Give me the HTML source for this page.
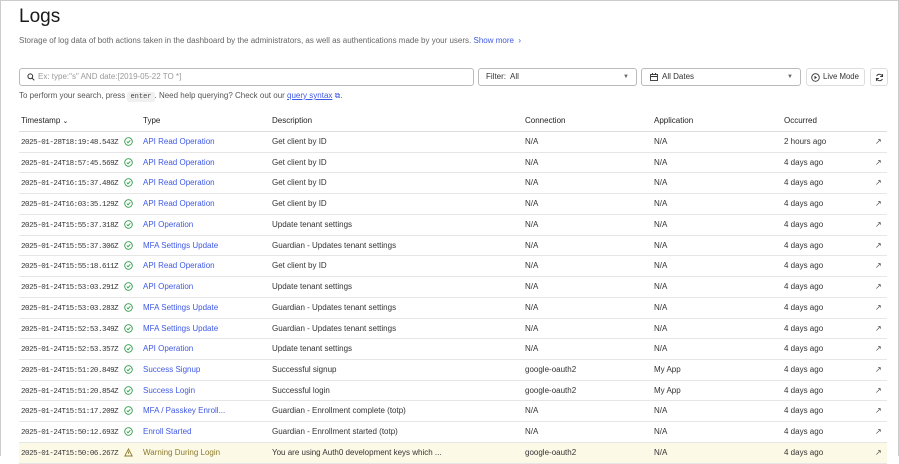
<!DOCTYPE html>
<html><head><style>
*{box-sizing:border-box;margin:0;padding:0}
body{width:899px;height:456px;overflow:hidden;background:#fff;font-family:"Liberation Sans",sans-serif;color:#222;position:relative;border:1px solid #ccc;border-bottom:none}
.a{position:absolute;white-space:nowrap}
h1{position:absolute;left:18px;top:5px;font-size:19px;font-weight:normal;color:#1a1a1a}
.sub{left:18px;top:35px;font-size:8px;color:#666}
.sub span{color:#3f59e4}
.box{position:absolute;border:1px solid #bbb;border-radius:3px;height:18px;top:67px;font-size:8px;color:#333;line-height:16px;white-space:nowrap}
.hint{left:18px;top:90px;font-size:8px;color:#555}
code{font-family:"Liberation Mono",monospace;font-size:7px;background:#f0f0f0;padding:1px 3px;border-radius:2px;color:#444}
.hint u{color:#3f59e4}
.hdr{position:absolute;left:18px;top:115px;width:868px;height:16px;border-bottom:1px solid #ddd;font-size:8px;color:#222}
.row{position:absolute;left:18px;width:868px;height:20.73px;border-bottom:1px solid #e6e6e6;font-size:8px;line-height:20px}
.row div,.hdr div{position:absolute;top:0;white-space:nowrap}
.row .ts{top:1px;left:2px;font-family:"Liberation Mono",monospace;font-size:7.5px;letter-spacing:-.45px;color:#333}
.ty{left:124px;color:#3f59e4}
.ic svg{display:block;position:absolute;top:5px;left:105px}
.de{left:253px;color:#333}.co{left:506px;color:#333}.ap{left:635px;color:#333}.oc{left:765px;color:#333}.ar{left:856px;color:#444}
.w{background:#fdf9e7}.w .ty{color:#8b7a2c}
</style></head><body>
<h1>Logs</h1>
<div class="a sub">Storage of log data of both actions taken in the dashboard by the administrators, as well as authentications made by your users. <span>Show more &nbsp;›</span></div>
<div class="box" style="left:18px;width:455px;padding-left:18px;color:#999"><svg style="position:absolute;left:7px;top:4px" width="8" height="8" viewBox="0 0 8 8"><circle cx="3.3" cy="3.3" r="2.4" fill="none" stroke="#333" stroke-width="1"/><path d="M5 5L7.3 7.3" stroke="#333" stroke-width="1"/></svg>Ex: type:"s" AND date:[2019-05-22 TO *]</div>
<div class="box" style="left:477px;width:159px;padding-left:7px">Filter:&nbsp; All<span style="position:absolute;right:7px;font-size:6px;color:#666">▼</span></div>
<div class="box" style="left:640px;width:160px;padding-left:20px"><svg style="position:absolute;left:8px;top:4px" width="8" height="8" viewBox="0 0 8 8"><rect x=".5" y="1.5" width="7" height="6" fill="none" stroke="#333" stroke-width=".9"/><path d="M.5 3.5H7.5M2.5 0V2M5.5 0V2" stroke="#333" stroke-width=".9"/></svg>All Dates<span style="position:absolute;right:7px;font-size:6px;color:#666">▼</span></div>
<div class="box" style="left:805px;width:59px;padding-left:16px;border-color:#ddd;font-size:7.8px">Live Mode<svg style="position:absolute;left:4px;top:4px" width="9" height="9" viewBox="0 0 9 9"><circle cx="4.5" cy="4.5" r="3.8" fill="none" stroke="#333" stroke-width=".9"/><path d="M3.5 2.8L6 4.5 3.5 6.2Z" fill="#333"/></svg></div>
<div class="box" style="left:869px;width:18px;border-color:#ddd"><svg style="position:absolute;left:4px;top:3.5px" width="9" height="9" viewBox="0 0 9 9"><path d="M7.5 3.5A3.2 3.2 0 0 0 1.6 3M1.5 5.5A3.2 3.2 0 0 0 7.4 6M7.6 1V3.5H5.2M1.4 8V5.5H3.8" fill="none" stroke="#333" stroke-width=".9"/></svg></div>
<div class="a hint">To perform your search, press <code>enter</code>. Need help querying? Check out our <u>query syntax</u> <span style="color:#3f59e4">⧉</span>.</div>
<div class="hdr"><div style="left:2px">Timestamp <span style="font-size:7px">⌄</span></div><div style="left:124px">Type</div><div style="left:253px">Description</div><div style="left:506px">Connection</div><div style="left:635px">Application</div><div style="left:765px">Occurred</div></div>
<div id="rows"></div>
<script>
var d=[["2025-01-28T18:19:48.543Z","API Read Operation","Get client by ID","N/A","N/A","2 hours ago"],
["2025-01-24T18:57:45.569Z","API Read Operation","Get client by ID","N/A","N/A","4 days ago"],
["2025-01-24T16:15:37.486Z","API Read Operation","Get client by ID","N/A","N/A","4 days ago"],
["2025-01-24T16:03:35.129Z","API Read Operation","Get client by ID","N/A","N/A","4 days ago"],
["2025-01-24T15:55:37.318Z","API Operation","Update tenant settings","N/A","N/A","4 days ago"],
["2025-01-24T15:55:37.306Z","MFA Settings Update","Guardian - Updates tenant settings","N/A","N/A","4 days ago"],
["2025-01-24T15:55:18.611Z","API Read Operation","Get client by ID","N/A","N/A","4 days ago"],
["2025-01-24T15:53:03.291Z","API Operation","Update tenant settings","N/A","N/A","4 days ago"],
["2025-01-24T15:53:03.283Z","MFA Settings Update","Guardian - Updates tenant settings","N/A","N/A","4 days ago"],
["2025-01-24T15:52:53.349Z","MFA Settings Update","Guardian - Updates tenant settings","N/A","N/A","4 days ago"],
["2025-01-24T15:52:53.357Z","API Operation","Update tenant settings","N/A","N/A","4 days ago"],
["2025-01-24T15:51:20.849Z","Success Signup","Successful signup","google-oauth2","My App","4 days ago"],
["2025-01-24T15:51:20.854Z","Success Login","Successful login","google-oauth2","My App","4 days ago"],
["2025-01-24T15:51:17.209Z","MFA / Passkey Enroll...","Guardian - Enrollment complete (totp)","N/A","N/A","4 days ago"],
["2025-01-24T15:50:12.693Z","Enroll Started","Guardian - Enrollment started (totp)","N/A","N/A","4 days ago"],
["2025-01-24T15:50:06.267Z","Warning During Login","You are using Auth0 development keys which ...","google-oauth2","N/A","4 days ago"]];
var ok='<svg width="9" height="9" viewBox="0 0 9 9"><circle cx="4.5" cy="4.5" r="3.8" fill="none" stroke="#2e9d4a" stroke-width=".9"/><path d="M2.8 4.6L4 5.8 6.3 3.3" fill="none" stroke="#2e9d4a" stroke-width=".9"/></svg>';
var wn='<svg width="9" height="9" viewBox="0 0 9 9"><path d="M4.5 1L8.2 8H.8Z" fill="none" stroke="#8b7a2c" stroke-width=".9"/><path d="M4.5 3.5V5.8" stroke="#8b7a2c" stroke-width=".9"/></svg>';
var h='';d.forEach(function(r,i){var w=i==15;h+='<div class="row'+(w?' w':'')+'" style="top:'+(131+i*20.73)+'px"><div class="ts">'+r[0]+'</div><div class="ic">'+(w?wn:ok)+'</div><div class="ty">'+r[1]+'</div><div class="de">'+r[2]+'</div><div class="co">'+r[3]+'</div><div class="ap">'+r[4]+'</div><div class="oc">'+r[5]+'</div><div class="ar">↗</div></div>';});
document.getElementById('rows').innerHTML=h;
</script>
</body></html>
